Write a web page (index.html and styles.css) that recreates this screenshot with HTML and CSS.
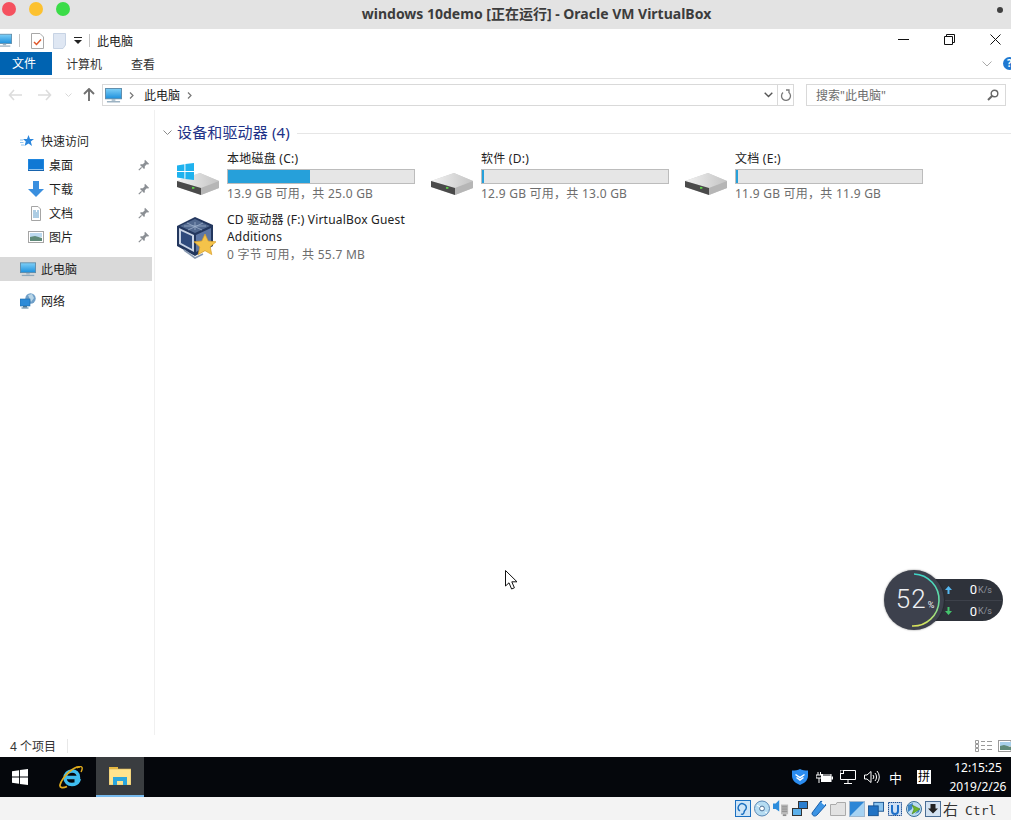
FILE: index.html
```html
<!DOCTYPE html>
<html lang="zh">
<head>
<meta charset="utf-8">
<title>windows 10demo</title>
<link rel="stylesheet" href="styles.css">
</head>
<body>
<svg class="defs" width="0" height="0">
  <defs>
    <linearGradient id="scr" x1="0" y1="0" x2="0" y2="1"><stop offset="0" stop-color="#7fd0f7"/><stop offset="1" stop-color="#1c8fdc"/></linearGradient>
    <linearGradient id="drv" x1="0" y1="0" x2="1" y2="0"><stop offset="0" stop-color="#f2f2f2"/><stop offset="1" stop-color="#c4c4c4"/></linearGradient>
    <linearGradient id="ring" x1="0" y1="0" x2="0" y2="1"><stop offset="0" stop-color="#3fd6c8"/><stop offset=".55" stop-color="#69dc9d"/><stop offset="1" stop-color="#d9e25a"/></linearGradient>
    <symbol id="pc" viewBox="0 0 18 16">
      <rect x=".5" y=".5" width="17" height="11" fill="url(#scr)" stroke="#5d8aa8"/>
      <rect x="7" y="12" width="4" height="1.6" fill="#9db4c4"/>
      <rect x="2" y="14" width="14" height="1.4" fill="#8fa8ba"/>
    </symbol>
    <symbol id="pin" viewBox="0 0 12 12">
      <path d="M7 .8 11.2 5 10 5.6 8.8 5.2 6.8 7.2 6.8 9.2 6 10 2 6 2.8 5.2 4.8 5.2 6.8 3.2 6.4 2Z" fill="#8b8f94"/>
      <path d="M3.6 8.4.8 11.2" stroke="#8b8f94" stroke-width="1.2"/>
    </symbol>
    <symbol id="drive" viewBox="0 0 42 22">
      <path d="M0 8 23 0 42 8 42 15 24 22 0 14Z" fill="#cfcfcf"/>
      <path d="M0 8 23 0 42 8 24 15Z" fill="url(#drv)"/>
      <path d="M0 8 24 15 24 22 0 14Z" fill="#4a4a4a"/>
      <path d="M24 15 42 8 42 15 24 22Z" fill="#b6b6b6"/>
      <rect x="15" y="14" width="2.4" height="1.8" fill="#5fd04d"/>
    </symbol>
  </defs>
</svg>

<div class="app">
  <header class="vm-title">
    <div class="lights"><i class="light red"></i><i class="light amber"></i><i class="light green"></i></div>
    <div class="vm-name">windows 10demo [正在运行] - Oracle VM VirtualBox</div>
    <i class="vm-dot"></i>
  </header>

  <section class="explorer">
    <div class="qat">
      <svg class="qat-pc" width="15" height="15"><use href="#pc"/></svg>
      <i class="qat-sep"></i>
      <svg class="qat-props" width="13" height="16" viewBox="0 0 13 16"><path d="M.5.5H9L12.5 4V15.5H.5Z" fill="#fff" stroke="#a8a8a8"/><path d="M3 9 5.5 11.5 10 6.5" fill="none" stroke="#e0572a" stroke-width="1.5"/></svg>
      <svg class="qat-blank" width="13" height="16" viewBox="0 0 13 16"><path d="M.5.5H12.5V12L10 15.5H.5Z" fill="#dfe7f3" stroke="#c7d3e4"/></svg>
      <svg class="qat-drop" width="8" height="7" viewBox="0 0 8 7"><rect y="0" width="8" height="1" fill="#222"/><path d="M0 3H8L4 7Z" fill="#222"/></svg>
      <i class="qat-sep second"></i>
      <span class="qat-text">此电脑</span>
      <div class="win-btns">
        <svg width="11" height="11" viewBox="0 0 11 11"><path d="M0 5.5H11" stroke="#111"/></svg>
        <svg width="11" height="11" viewBox="0 0 11 11"><path d="M2.5 2.5V.5H10.5V8.5H8.5M.5 2.5H8.5V10.5H.5Z" fill="none" stroke="#111"/></svg>
        <svg width="11" height="11" viewBox="0 0 11 11"><path d="M.5.5 10.5 10.5M10.5.5.5 10.5" stroke="#111"/></svg>
      </div>
    </div>

    <nav class="tabs">
      <span class="tab-file">文件</span>
      <span class="tab">计算机</span>
      <span class="tab">查看</span>
      <svg class="ribbon-chev" width="10" height="6" viewBox="0 0 10 6"><path d="M.5.5 5 5 9.5.5" fill="none" stroke="#a9a9a9"/></svg>
      <span class="help">?</span>
    </nav>

    <div class="addr-row">
      <svg class="nav-ico" width="14" height="12" viewBox="0 0 14 12"><path d="M6 1 1.5 6 6 11M1.5 6H14" fill="none" stroke="#dcdcdc" stroke-width="1.6"/></svg>
      <svg class="nav-ico fwd" width="14" height="12" viewBox="0 0 14 12"><path d="M8 1 12.5 6 8 11M12.5 6H0" fill="none" stroke="#dcdcdc" stroke-width="1.6"/></svg>
      <svg class="nav-ico small" width="7" height="4" viewBox="0 0 7 4"><path d="M.5.5 3.5 3.5 6.5.5" fill="none" stroke="#d8d8d8"/></svg>
      <svg class="nav-ico up" width="12" height="13" viewBox="0 0 12 13"><path d="M1 6 6 1 11 6M6 1V13" fill="none" stroke="#707070" stroke-width="1.9"/></svg>
      <div class="addr">
        <svg class="addr-pc" width="17" height="15"><use href="#pc"/></svg>
        <svg class="crumb" width="5" height="7" viewBox="0 0 5 7"><path d="M1 .5 4 3.5 1 6.5" fill="none" stroke="#777" stroke-width="1.2"/></svg>
        <span class="addr-text">此电脑</span>
        <svg class="crumb" width="5" height="7" viewBox="0 0 5 7"><path d="M1 .5 4 3.5 1 6.5" fill="none" stroke="#777" stroke-width="1.2"/></svg>
        <svg class="addr-drop" width="9" height="6" viewBox="0 0 9 6"><path d="M.7.7 4.5 4.5 8.3.7" fill="none" stroke="#555" stroke-width="1.4"/></svg>
        <div class="addr-refresh"><svg width="12" height="13" viewBox="0 0 12 13"><path d="M8.5 3.2A4.5 4.5 0 1 1 3 3.6M6 1H9V4" fill="none" stroke="#777" stroke-width="1.3"/></svg></div>
      </div>
      <div class="search">
        <span>搜索"此电脑"</span>
        <svg width="12" height="12" viewBox="0 0 12 12"><circle cx="7.5" cy="4.5" r="3.3" fill="none" stroke="#666" stroke-width="1.4"/><path d="M5 7 1 11" stroke="#666" stroke-width="2"/></svg>
      </div>
    </div>

    <div class="body">
      <aside class="side">
        <div class="side-row lvl1">
          <svg class="side-ico star" width="14" height="14" viewBox="0 0 14 14"><path d="M8.5 1 10 5H14L10.8 7.6 12 12 8.5 9.4 4.5 12 5.8 7.6 3 5H7Z" fill="#2a86dc"/><path d="M0 6H3M0 8.5H3.5M1 11H4" stroke="#8cc2ee"/></svg>
          <span>快速访问</span>
        </div>
        <div class="side-row lvl2">
          <svg class="side-ico" width="16" height="12" viewBox="0 0 16 12"><rect width="16" height="12" fill="#2b8fe6"/><rect x=".6" y=".6" width="14.8" height="9.8" fill="#0f78d4"/><rect x="1" y="10.4" width="14" height=".9" fill="#dcecf9"/><rect y="11" width="16" height="1" fill="#1763ad"/></svg>
          <span>桌面</span>
          <svg class="pin" width="12" height="12"><use href="#pin"/></svg>
        </div>
        <div class="side-row lvl2">
          <svg class="side-ico" width="16" height="16" viewBox="0 0 16 16"><path d="M5 0H11V8H16L8 16 0 8H5Z" fill="#3a8fdf"/></svg>
          <span>下载</span>
          <svg class="pin" width="12" height="12"><use href="#pin"/></svg>
        </div>
        <div class="side-row lvl2">
          <svg class="side-ico" width="16" height="15" viewBox="0 0 16 15"><path d="M3.5.5H10L12.5 3V14.5H3.5Z" fill="#fff" stroke="#a5a5a5"/><path d="M5 5H8M9 5H11M5 7H11M5 9H11M5 11H11" stroke="#5a9ac8"/></svg>
          <span>文档</span>
          <svg class="pin" width="12" height="12"><use href="#pin"/></svg>
        </div>
        <div class="side-row lvl2">
          <svg class="side-ico" width="16" height="12" viewBox="0 0 16 12"><rect x=".5" y=".5" width="15" height="11" fill="#fff" stroke="#a5a5a5"/><rect x="2" y="2" width="12" height="4" fill="#bcd9ef"/><path d="M2 6 7 5 14 7V10H2Z" fill="#5f8a79"/></svg>
          <span>图片</span>
          <svg class="pin" width="12" height="12"><use href="#pin"/></svg>
        </div>
        <div class="side-row lvl1 selected gap-top">
          <svg class="side-ico" width="16" height="15"><use href="#pc"/></svg>
          <span>此电脑</span>
        </div>
        <div class="side-row lvl1 gap-top">
          <svg class="side-ico" width="16" height="16" viewBox="0 0 16 16"><circle cx="10.5" cy="5.5" r="5.2" fill="#6f9fc8"/><path d="M8 2 12 1 14 5 11 9Z" fill="#b7d4e6"/><rect x="0" y="6" width="10" height="7" fill="#2d8bd8" stroke="#1a6aa8" stroke-width=".6"/><rect x="3" y="13" width="4" height="1.5" fill="#4d7895"/><rect x="1.5" y="14.5" width="7" height="1" fill="#4d7895"/></svg>
          <span>网络</span>
        </div>
      </aside>

      <main class="main">
        <div class="group">
          <svg class="group-chev" width="9" height="6" viewBox="0 0 9 6"><path d="M.5.5 4.5 4.5 8.5.5" fill="none" stroke="#8a8a8a"/></svg>
          <span class="group-name">设备和驱动器 (4)</span>
          <i class="group-line"></i>
        </div>
        <div class="tiles">
          <div class="tile">
            <div class="tile-ico">
              <svg class="win-flag" width="17" height="17" viewBox="0 0 17 17"><path d="M0 2.4 7.4 1.3V8H0ZM8.4 1.1 17 0V8H8.4ZM0 9H7.4V15.7L0 14.6ZM8.4 9H17V17L8.4 15.9Z" fill="#1fb2ee"/></svg>
              <svg class="drive" width="42" height="22"><use href="#drive"/></svg>
            </div>
            <div class="tile-info">
              <div class="tile-name">本地磁盘 (C:)</div>
              <div class="bar"><div class="fill" style="width:44%"></div></div>
              <div class="tile-sub">13.9 GB 可用，共 25.0 GB</div>
            </div>
          </div>
          <div class="tile">
            <div class="tile-ico">
              <svg class="drive" width="42" height="22"><use href="#drive"/></svg>
            </div>
            <div class="tile-info">
              <div class="tile-name">软件 (D:)</div>
              <div class="bar"><div class="fill" style="width:1%"></div></div>
              <div class="tile-sub">12.9 GB 可用，共 13.0 GB</div>
            </div>
          </div>
          <div class="tile">
            <div class="tile-ico">
              <svg class="drive" width="42" height="22"><use href="#drive"/></svg>
            </div>
            <div class="tile-info">
              <div class="tile-name">文档 (E:)</div>
              <div class="bar"><div class="fill" style="width:1%"></div></div>
              <div class="tile-sub">11.9 GB 可用，共 11.9 GB</div>
            </div>
          </div>
          <div class="tile cd">
            <div class="tile-ico">
              <svg class="vbox" width="42" height="46" viewBox="0 0 42 46">
                <path d="M19 1 37 9 37 30 19 40 1 30 1 10Z" fill="#23375e"/>
                <path d="M19 3 34 10 19 17 4 10Z" fill="#51688e"/>
                <path d="M19 6V14M11 7 26 14M27 7 12 14M8 10H30" stroke="#9db0cc" stroke-width=".8"/>
                <path d="M3 12 18 19V36L3 28Z" fill="#c9d4e6"/>
                <path d="M5 15 16 20V33L5 27Z" fill="#2f4a7c"/>
                <path d="M20 19 35 12V28L20 36Z" fill="#5d76a3"/>
                <path d="M8 34 19 42 27 38" fill="none" stroke="#8899b0" stroke-width="1.6"/>
                <path d="M29 18 32.2 25 40 25.8 34.2 31 35.8 38.6 29 34.7 22.2 38.6 23.8 31 18 25.8 25.8 25Z" fill="#f4c34a" stroke="#d99c25" stroke-width=".7"/>
              </svg>
            </div>
            <div class="tile-info">
              <div class="tile-name wrap">CD 驱动器 (F:) VirtualBox Guest Additions</div>
              <div class="tile-sub">0 字节 可用，共 55.7 MB</div>
            </div>
          </div>
        </div>
      </main>
    </div>

    <footer class="status">
      <span class="status-text">4 个项目</span>
      <i class="status-sep"></i>
      <svg class="view-list" width="17" height="12" viewBox="0 0 17 12"><path d="M.5.5H3.5V3.5H.5ZM.5 4.5H3.5V7.5H.5ZM.5 8.5H3.5V11.5H.5Z" fill="none" stroke="#9a9a9a"/><path d="M6 1.5H10M12 1.5H17M6 5.5H10M12 5.5H17M6 9.5H10M12 9.5H17" stroke="#9a9a9a"/></svg>
      <svg class="view-big" width="13" height="12" viewBox="0 0 13 12"><rect x=".5" y=".5" width="12.5" height="11" fill="#fff" stroke="#9a9a9a"/><rect x="2" y="2" width="11" height="4" fill="#a8d0ea"/><path d="M2 6 6 5 13 7V10H2Z" fill="#5f8a79"/></svg>
    </footer>
  </section>

  <div class="taskbar">
    <svg class="start" width="16" height="16" viewBox="0 0 16 16"><path d="M0 2.3 7 1.3V7.6H0ZM7.9 1.1 16 0V7.6H7.9ZM0 8.4H7V14.7L0 13.7ZM7.9 8.4H16V16L7.9 14.9Z" fill="#fff"/></svg>
    <svg class="ie" width="24" height="24" viewBox="0 0 24 24">
      <path d="M6 12.5H19.5C19.5 8 16.5 6 13 6 9 6 6 9 6 13 6 17 9 19.5 13 19.5 16 19.5 18.5 18.2 19.5 16H15.5" fill="none" stroke="#3fbdf0" stroke-width="3.4"/>
      <path d="M21 2C15 1 3 12 1 20 .5 23 4 23.5 8 21.5" fill="none" stroke="#e2ac1c" stroke-width="1.7"/>
      <path d="M18 3C21 .8 24 1.2 23 4.5 22.8 5.5 22.4 6.2 22 7" fill="none" stroke="#e2ac1c" stroke-width="1.4"/>
    </svg>
    <div class="task-active">
      <svg width="22" height="18" viewBox="0 0 22 18"><rect x="0" y="0" width="9" height="3" fill="#e8b93f"/><rect x="0" y="2" width="22" height="16" fill="#fee48f" stroke="#d7ae55" stroke-width=".6"/><path d="M4 18V10H18V18H14V14H8V18Z" fill="#2ba6dd"/></svg>
    </div>
    <div class="tray">
      <svg class="t-shield" width="16" height="16" viewBox="0 0 16 16"><path d="M8 0C10 1 13 1.5 16 1.5V7C16 11.5 12 14.5 8 16 4 14.5 0 11.5 0 7V1.5C3 1.5 6 1 8 0Z" fill="#2b8cf0"/><path d="M3.5 5.5 8 8.5 12.5 5.5M4.5 8.5 8 11 11.5 8.5" fill="none" stroke="#fff" stroke-width="1.5"/></svg>
      <svg class="t-batt" width="17" height="11" viewBox="0 0 17 11"><path d="M2 0V3M4.5 0V3M0 3H6V6H0ZM3 6V11" stroke="#fff" fill="none"/><rect x="5" y="2" width="10.5" height="8" fill="#fff"/><rect x="15.5" y="4.5" width="1.5" height="3" fill="#fff"/><rect x="7" y="2.5" width="7.5" height="1" fill="#05070c"/></svg>
      <svg class="t-net" width="16" height="15" viewBox="0 0 16 15"><path d="M3.5.5H15.5V9.5H.5V4" fill="none" stroke="#fff"/><rect x="0" y="0" width="3.5" height="3.5" fill="none" stroke="#fff"/><path d="M8 10V13M4 13.5H12" stroke="#fff"/></svg>
      <svg class="t-vol" width="16" height="14" viewBox="0 0 16 14"><path d="M.5 5H3L7 1.5V12.5L3 9H.5Z" fill="none" stroke="#fff"/><path d="M9 5A3 3 0 0 1 9 9M11 3A6 6 0 0 1 11 11M13 1A9 9 0 0 1 13 13" fill="none" stroke="#fff"/></svg>
      <span class="t-ime">中</span>
      <span class="t-pin">拼</span>
      <div class="clock"><div>12:15:25</div><div>2019/2/26</div></div>
    </div>
  </div>

  <div class="vbox-bar">
    <svg width="16" height="17" viewBox="0 0 16 17"><rect x=".5" y=".5" width="15" height="16" fill="#cfe5f7" stroke="#1a6fc0"/><path d="M5 11A4 4 0 1 1 11 9C10 10 9 11 9 12.5A2 2 0 0 1 6 14" fill="none" stroke="#1a6fc0" stroke-width="1.4"/></svg>
    <svg width="16" height="17" viewBox="0 0 16 17"><circle cx="8" cy="8.5" r="7.5" fill="#b6dcf2" stroke="#5a88b5"/><circle cx="8" cy="8.5" r="2.4" fill="#fff" stroke="#4a6d94"/><path d="M3 5 6 7M11 12 13 13" stroke="#fff"/></svg>
    <svg width="16" height="17" viewBox="0 0 18 19"><path d="M0 4H3L7 0V13L3 10H0Z" fill="#2b8cdc"/><rect x="9" y="5" width="8" height="11" fill="#bdbdbd"/><path d="M10 7H16M10 9H16M10 11H16M10 13H16" stroke="#8c8c8c"/><rect x="11" y="16" width="4" height="2" fill="#8c8c8c"/></svg>
    <svg width="16" height="16" viewBox="0 0 16 16"><rect x="6.5" y=".5" width="9" height="7" fill="#2b7fd0" stroke="#333"/><rect x=".5" y="7.5" width="9" height="7" fill="#5cb0ea" stroke="#333"/></svg>
    <svg width="16" height="17" viewBox="0 0 16 17"><path d="M10 1 15 5 6 15C4 17 1 16 1 13Z" fill="#3c94e4" stroke="#1a5ea8"/><path d="M11 2 14 4.5" stroke="#fff" stroke-width="2"/></svg>
    <svg width="16" height="14" viewBox="0 0 16 14"><path d="M.5 2.5H6L7 .5H15.5V13.5H.5Z" fill="#e2e2e2" stroke="#aaa"/></svg>
    <svg width="16" height="16" viewBox="0 0 16 16"><rect x=".5" y=".5" width="15" height="15" fill="#2c86d6" stroke="#9fb8d0"/><path d="M1 15 15 1V15Z" fill="#a6d2f2"/></svg>
    <svg width="16" height="16" viewBox="0 0 18 16"><rect x="6.5" y=".5" width="11" height="10" fill="#8dc5ef" stroke="#14508f"/><rect x=".5" y="4.5" width="11" height="11" fill="#2273c4" stroke="#14508f"/></svg>
    <svg width="16" height="16" viewBox="0 0 16 16"><rect x="1.5" y="1.5" width="13" height="13" fill="#cfe0f4" stroke="#1e4f93" stroke-dasharray="1.5 .6"/><path d="M5 4V10A3 3 0 0 0 11 10V4" fill="none" stroke="#1e6fc8" stroke-width="2"/></svg>
    <svg width="16" height="16" viewBox="0 0 16 16"><circle cx="8" cy="8" r="7.5" fill="#bcdcf0" stroke="#3b6f99"/><path d="M2 4 7 2 6 8 2 11ZM9 13 13 11 14 7Z" fill="#3f86c5"/><path d="M6 4 14 8 6 13 8 8Z" fill="#6fb52d" stroke="#3d7a10" stroke-width=".5"/></svg>
    <svg width="16" height="16" viewBox="0 0 16 16"><rect x=".5" y=".5" width="15" height="15" fill="#d3e2f1" stroke="#4a6d94"/><path d="M5.5 3H10.5V7.5H13L8 12.5 3 7.5H5.5Z" fill="#222"/></svg>
    <span class="host-key"><span class="hk-cn">右</span><span class="hk-mono">Ctrl</span></span>
  </div>

  <div class="net-widget">
    <div class="nw-pill">
      <div class="nw-line"><svg width="7" height="8" viewBox="0 0 7 8"><path d="M3.5 0 7 4H4.5V8H2.5V4H0Z" fill="#55b9f2"/></svg><b>0</b><em>K/s</em></div>
      <div class="nw-line"><svg width="7" height="8" viewBox="0 0 7 8"><path d="M3.5 8 7 4H4.5V0H2.5V4H0Z" fill="#45c46d"/></svg><b>0</b><em>K/s</em></div>
    </div>
    <div class="nw-dial">
      <svg class="nw-ring" width="60" height="60" viewBox="0 0 60 60"><path d="M30 4A26 26 0 0 1 28 56" fill="none" stroke="url(#ring)" stroke-width="1.6"/></svg>
      <span class="nw-num">52</span><span class="nw-pct">%</span>
    </div>
  </div>

  <svg class="cursor" width="14" height="20" viewBox="0 0 14 20"><path d="M.5.5V16L4 12.8 6.6 19 9.4 17.8 6.8 11.8H12Z" fill="#fff" stroke="#111"/></svg>
</div>
</body>
</html>
```

FILE: styles.css
```css
* { box-sizing: border-box; }
html, body { margin: 0; padding: 0; }
body {
  width: 1011px;
  height: 820px;
  overflow: hidden;
  background: #fff;
  font-family: "Noto Sans", "Noto Sans CJK SC", sans-serif;
  font-size: 12px;
  color: #1a1a1a;
}
.defs { position: absolute; }
svg { display: block; flex: none; }
i, em { font-style: normal; display: block; }

.app { position: relative; display: flex; flex-direction: column; height: 820px; overflow: hidden; }

/* host title bar */
.vm-title { position: relative; height: 29px; flex: none; background: #e3e3e3; display: flex; align-items: center; justify-content: center; padding-left: 62px; }
.lights { position: absolute; top: 2px; left: 2px; display: flex; gap: 13px; }
.light { width: 14px; height: 14px; border-radius: 50%; }
.red { background: #f5515f; }
.amber { background: #fcc12f; }
.green { background: #3bdc48; }
.vm-name { font: bold 14px "Noto Sans", "Noto Sans CJK SC", sans-serif; color: #3c3c3c; line-height: 26px; padding-bottom: 2px; }
.vm-dot { position: absolute; top: 7px; right: 8px; width: 6px; height: 6px; border-radius: 50%; background: #3f3f3f; }

/* explorer */
.explorer { flex: none; height: 728px; display: flex; flex-direction: column; background: #fff; }
.qat { height: 23px; flex: none; display: flex; align-items: center; position: relative; }
.qat-pc { margin-left: -3px; }
.qat-sep { width: 1px; height: 13px; background: #c4c4c4; margin-left: 7px; }
.qat-props { margin-left: 11px; }
.qat-blank { margin-left: 9px; }
.qat-drop { margin-left: 8px; }
.qat-sep.second { margin-left: 7px; }
.qat-text { margin-left: 7px; color: #222; }
.win-btns { margin-left: auto; margin-right: 10px; display: flex; gap: 35px; margin-top: -3px; }

.tabs { height: 23px; flex: none; display: flex; align-items: center; }
.tab-file { width: 52px; height: 23px; line-height: 23px; padding-left: 12px; background: #0063b1; color: #fff; }
.tab { margin-left: 14px; width: 37px; text-align: left; color: #333; }
.tab + .tab { margin-left: 28px; }
.ribbon-chev { margin-left: auto; }
.help { margin-left: 11px; margin-right: -5px; width: 13px; height: 13px; border-radius: 50%; background: #1f78d1; color: #fff; font-size: 10px; font-weight: bold; line-height: 13px; text-align: center; }

.addr-row { height: 32px; flex: none; margin-top: 3px; border-top: 1px solid #e0e0e0; display: flex; align-items: center; padding: 0 5px 0 8px; }
.nav-ico.fwd { margin-left: 16px; }
.nav-ico.small { margin-left: 13px; }
.nav-ico.up { margin-left: 11px; }
.addr { margin-left: 7px; width: 692px; height: 22px; border: 1px solid #d9d9d9; display: flex; align-items: center; margin-top: 1px; }
.addr-pc { margin-left: 2px; }
.crumb { margin-left: 7px; }
.addr-text { margin-left: 10px; color: #222; }
.addr-text + .crumb { margin-left: 7px; }
.addr-drop { margin-left: auto; margin-right: 4px; }
.addr-refresh { width: 16px; height: 20px; border-left: 1px solid #d9d9d9; display: flex; align-items: center; justify-content: center; }
.search { margin-left: 12px; width: 200px; height: 22px; margin-top: 1px; border: 1px solid #d9d9d9; display: flex; align-items: center; justify-content: space-between; padding: 0 6px 0 9px; color: #6d6d6d; }

.body { flex: 1; min-height: 0; display: flex; }
.side { width: 155px; flex: none; padding: 19px 2px 0 0; border-right: 1px solid #f0f0f0; }
.side-row { height: 24px; display: flex; align-items: center; color: #1f1f1f; }
.side-row.lvl1 { padding-left: 20px; }
.side-row.lvl2 { padding-left: 28px; }
.side-row .side-ico { margin-right: 5px; }
.side-row .side-ico.star { margin-right: 7px; }
.side-row.gap-top { margin-top: 8px; }
.selected { background: #d9d9d9; }
.pin { margin-left: auto; margin-right: 2px; }

.main { flex: 1; min-width: 0; padding: 12px 0 0 8px; }
.group { display: flex; align-items: center; height: 20px; }
.group-chev { margin-top: 2px; }
.group-name { margin-left: 5px; font-size: 15px; line-height: 20px; letter-spacing: .15px; color: #1e3287; }
.group-line { flex: 1; height: 1px; background: #e6e6e6; margin-left: 7px; margin-top: 2px; }
.tiles { display: grid; grid-template-columns: repeat(3, 254px); grid-auto-rows: 60px; margin: 7px 0 0 13px; }
.tile { display: flex; height: 60px; }
.tile-ico { position: relative; width: 51px; flex: none; }
.drive { position: absolute; left: 1px; top: 24px; }
.win-flag { position: absolute; left: 1px; top: 14px; z-index: 1; }
.vbox { position: absolute; left: 0; top: 7px; }
.tile-info { width: 188px; letter-spacing: .25px; }
.tile-name { line-height: 19px; margin-bottom: 1px; color: #222; }
.tile-name.wrap { line-height: 17px; white-space: normal; width: 190px; margin: 2px 0 0; letter-spacing: .2px; }
.bar { height: 15px; border: 1px solid #bcbcbc; background: #e6e6e6; }
.fill { height: 100%; background: #26a0da; }
.tile-sub { color: #6d6d6d; line-height: 18px; margin-top: 1px; }

.status { height: 22px; flex: none; display: flex; align-items: center; padding-left: 10px; color: #333; }
.status-text { width: 57px; }
.status-sep { width: 1px; height: 14px; background: #e8e8e8; }
.view-list { margin-left: auto; }
.view-big { margin-left: 6px; }

/* taskbar */
.taskbar { height: 40px; flex: none; background: #05070c; display: flex; align-items: center; color: #fff; }
.start { margin-left: 12px; }
.ie { margin-left: 31px; }
.task-active { margin-left: 13px; width: 48px; height: 40px; background: #3a3d40; border-bottom: 2px solid #76b9ed; display: flex; align-items: center; justify-content: center; }
.tray { margin-left: auto; display: flex; align-items: center; }
.t-batt { margin-left: 8px; }
.t-net { margin-left: 7px; }
.t-vol { margin-left: 8px; }
.t-ime { margin-left: 9px; font-size: 13px; }
.t-pin { margin-left: 15px; width: 14px; height: 14px; background: #fff; color: #000; font-size: 12px; line-height: 14px; text-align: center; }
.clock { width: 66px; margin-left: 14px; text-align: center; line-height: 19px; font-size: 12px; }

/* vm status */
.vbox-bar { flex: 1; background: #f3f3f3; display: flex; align-items: center; padding-left: 735px; gap: 3px; }
.vbox-bar svg { width: 16px; }
.host-key { margin-left: -1px; white-space: nowrap; color: #333; line-height: 18px; display: flex; align-items: baseline; gap: 7px; }
.hk-cn { font-size: 15px; }
.hk-mono { font: 13px "DejaVu Sans Mono", monospace; }

/* overlays */
.net-widget { position: absolute; left: 884px; top: 570px; width: 119px; height: 60px; }
.nw-pill { position: absolute; left: 30px; top: 9px; width: 89px; height: 42px; border-radius: 21px; background: #2e323a; padding-left: 31px; display: flex; flex-direction: column; }
.nw-line { height: 21px; display: flex; align-items: center; }
.nw-line + .nw-line { border-top: 1px solid #3d414a; }
.nw-line b { margin-left: auto; font: 13px Roboto, sans-serif; color: #fff; }
.nw-line em { width: 19px; margin-left: 1px; margin-right: 6px; font: 9px Roboto, sans-serif; color: #8f949e; }
.nw-dial { position: absolute; left: 0; top: 0; width: 60px; height: 60px; border-radius: 50%; background: #3d414d; box-shadow: 0 0 2px rgba(0,0,0,.5); display: flex; align-items: baseline; justify-content: center; padding: 14px 0 0 2px; color: #eef0f3; }
.nw-ring { position: absolute; left: 0; top: 0; }
.nw-num { font: 300 26px/30px Roboto, sans-serif; letter-spacing: 1px; }
.nw-pct { font: 9px Roboto, sans-serif; margin-left: 1px; }
.cursor { position: absolute; left: 505px; top: 570px; }
```
